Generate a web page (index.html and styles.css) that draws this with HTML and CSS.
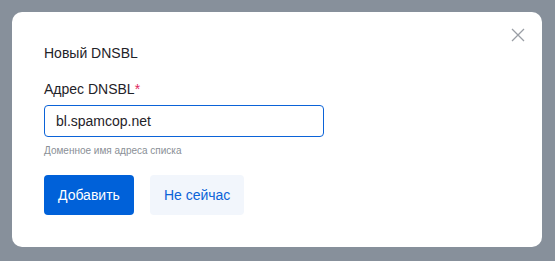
FILE: index.html
```html
<!DOCTYPE html>
<html lang="ru">
<head>
    <meta charset="UTF-8">
    <meta name="viewport" content="width=device-width, initial-scale=1.0">
    <title>Новый DNSBL</title>
    <link rel="stylesheet" href="styles.css">
</head>
<body>

    <!-- Add DNSBL dialog -->
    <div class="modal">
        <button class="close" type="button" aria-label="Закрыть">
            <svg width="14" height="14" viewBox="0 0 14 14">
                <path d="M1 1L13 13M13 1L1 13" stroke="#9a9ea5" stroke-width="1.3" fill="none"/>
            </svg>
        </button>
        <h2 class="title">Новый DNSBL</h2>
        <form class="form">
            <label class="label" for="address">Адрес DNSBL<span class="req">*</span></label>
            <input class="input" id="address" type="text" value="bl.spamcop.net">
            <div class="hint">Доменное имя адреса списка</div>
            <div class="actions">
                <button class="btn btn-primary" type="submit">Добавить</button>
                <button class="btn btn-secondary" type="button">Не сейчас</button>
            </div>
        </form>
    </div>

</body>
</html>
```

FILE: styles.css
```css
body {
    margin: 0;
    padding: 12px;
    background: #87909b;
    font-family: "Liberation Sans", Arial, sans-serif;
    color: #1f2329;
}
.modal {
    position: relative;
    box-sizing: border-box;
    width: 530px;
    height: 235px;
    padding: 31px 32px 0;
    background: #fff;
    border-radius: 10px;
}
.close {
    position: absolute;
    top: 16px;
    right: 17px;
    padding: 0;
    border: none;
    background: none;
    cursor: pointer;
    line-height: 0;
}
.title {
    margin: 0;
    font-size: 14px;
    font-weight: normal;
    line-height: 20px;
}
.form {
    display: flex;
    flex-direction: column;
    align-items: flex-start;
    margin-top: 16px;
}
.label {
    font-size: 14px;
    line-height: 20px;
}
.req {
    color: #e0245e;
}
.input {
    box-sizing: border-box;
    width: 280px;
    height: 32px;
    margin-top: 6px;
    padding: 0 11px;
    border: 1px solid #0b63d8;
    border-radius: 4px;
    font-family: inherit;
    font-size: 14px;
    color: #1f2329;
    outline: none;
}
.hint {
    margin-top: 7px;
    font-size: 10px;
    line-height: 14px;
    color: #8a8f96;
}
.actions {
    display: flex;
    gap: 16px;
    margin-top: 17px;
}
.btn {
    height: 40px;
    padding: 0 14px;
    border: none;
    border-radius: 4px;
    font-family: inherit;
    font-size: 14px;
    cursor: pointer;
}
.btn-primary {
    background: #0061d9;
    color: #fff;
}
.btn-secondary {
    background: #f2f6fc;
    color: #0b63d8;
}
```
